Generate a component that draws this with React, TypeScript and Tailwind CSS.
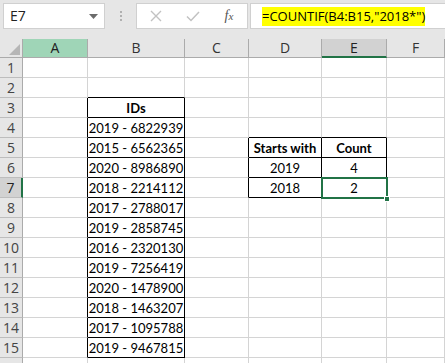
import React from "react";

const cols = [
  { key: "A", w: 65 },
  { key: "B", w: 97 },
  { key: "C", w: 64 },
  { key: "D", w: 73 },
  { key: "E", w: 65 },
  { key: "F", w: 58 },
];

const ids = [
  "2019 - 6822939",
  "2015 - 6562365",
  "2020 - 8986890",
  "2018 - 2214112",
  "2017 - 2788017",
  "2019 - 2858745",
  "2016 - 2320130",
  "2019 - 7256419",
  "2020 - 1478900",
  "2018 - 1463207",
  "2017 - 1095788",
  "2019 - 9467815",
];

type Cell = { v: string; bold?: boolean; fill?: boolean };

function getCell(col: string, row: number): Cell | null {
  if (col === "B" && row === 3) return { v: "IDs", bold: true, fill: true };
  if (col === "B" && row >= 4 && row <= 15) return { v: ids[row - 4] };
  if (col === "D" && row === 5) return { v: "Starts with", bold: true, fill: true };
  if (col === "E" && row === 5) return { v: "Count", bold: true, fill: true };
  if (col === "D" && row === 6) return { v: "2019" };
  if (col === "E" && row === 6) return { v: "4" };
  if (col === "D" && row === 7) return { v: "2018" };
  if (col === "E" && row === 7) return { v: "2" };
  return null;
}

function inTable(col: string, row: number) {
  return getCell(col, row) !== null;
}

const colKeys = cols.map((c) => c.key);

export default function App() {
  const rows = Array.from({ length: 16 }, (_, i) => i + 1);
  return (
    <div
      className="w-[445px] h-[363px] overflow-hidden bg-[#e6e6e6] relative"
      style={{ fontFamily: "'Open Sans', 'Noto Sans', sans-serif" }}
    >
      {/* Formula bar */}
      <div className="h-[39px] flex items-start pt-[3px] pl-[3px]">
        <div className="w-[102px] h-[26px] bg-white border border-[#d0d0d0] flex items-center justify-between pl-[6px] pr-[6px]">
          <span className="text-[14px] text-[#222] leading-none">E7</span>
          <svg width="9" height="5" viewBox="0 0 9 5">
            <polygon points="0,0 9,0 4.5,5" fill="#6b6b6b" />
          </svg>
        </div>
        <div className="w-[31px] h-[26px] flex flex-col items-center justify-center gap-[2px]">
          <div className="w-[2px] h-[2px] bg-[#b0b0b0]" />
          <div className="w-[2px] h-[2px] bg-[#b0b0b0]" />
          <div className="w-[2px] h-[2px] bg-[#b0b0b0]" />
        </div>
        <div className="w-[112px] h-[26px] bg-white border border-[#d0d0d0] flex items-center">
          <div className="w-[36px] flex justify-center ml-[1px]">
            <svg width="12" height="12" viewBox="0 0 12 12">
              <path d="M1 1 L11 11 M11 1 L1 11" stroke="#c2c2c2" strokeWidth="1.4" />
            </svg>
          </div>
          <div className="w-[37px] flex justify-center">
            <svg width="14" height="11" viewBox="0 0 14 11">
              <path d="M1 5.5 L5 9.5 L13 1" stroke="#c2c2c2" strokeWidth="1.5" fill="none" />
            </svg>
          </div>
          <div className="w-[36px] flex justify-center">
            <span
              className="text-[14px] italic text-[#555] leading-none"
              style={{ fontFamily: "'Liberation Serif', serif" }}
            >
              f<span className="text-[11px]">x</span>
            </span>
          </div>
        </div>
        <div className="ml-[2px] flex-1 h-[26px] bg-white border border-[#d0d0d0] border-r-0 flex items-center pl-[11px]">
          <span className="bg-[#ffff00] text-[13px] leading-[19px] text-black whitespace-nowrap">
            =COUNTIF(B4:B15,"2018*")
          </span>
        </div>
      </div>

      {/* Grid */}
      <div
        className="grid"
        style={{
          gridTemplateColumns: `23px ${cols.map((c) => c.w + "px").join(" ")}`,
          gridTemplateRows: `19px repeat(16, 20px)`,
        }}
      >
        {/* Corner */}
        <div className="bg-[#e6e6e6] border-r border-b border-[#ababab] relative">
          <svg className="absolute right-[2px] bottom-[2px]" width="11" height="11" viewBox="0 0 11 11">
            <polygon points="11,0 11,11 0,11" fill="#b6b6b6" />
          </svg>
        </div>
        {cols.map((c) => (
          <div
            key={c.key}
            className={
              "flex items-center justify-center text-[14px] leading-none border-r border-[#ababab] " +
              (c.key === "A"
                ? "bg-[#9fd5b7] text-[#222] border-b border-b-[#ababab]"
                : c.key === "E"
                ? "bg-[#d2d2d2] text-[#222] border-b-2 border-b-[#217346]"
                : "bg-[#e6e6e6] text-[#333] border-b border-b-[#ababab]")
            }
          >
            {c.key}
          </div>
        ))}

        {rows.map((r) => (
          <React.Fragment key={r}>
            <div
              className={
                "flex items-center justify-center text-[14px] leading-none border-b border-[#bdbdbd] " +
                (r === 7
                  ? "bg-[#d2d2d2] text-[#222] border-r-2 border-r-[#217346]"
                  : "bg-[#e6e6e6] text-[#444] border-r border-r-[#ababab]")
              }
            >
              {r <= 15 ? r : ""}
            </div>
            {cols.map((c, ci) => {
              const cell = getCell(c.key, r);
              const rightKey = colKeys[ci + 1];
              const blackRight = inTable(c.key, r) || (rightKey ? inTable(rightKey, r) : false);
              const blackBottom = inTable(c.key, r) || inTable(c.key, r + 1);
              return (
                <div
                  key={c.key}
                  className={
                    "bg-white border-r border-b flex items-center justify-center pt-[2px] text-[13px] leading-none text-black whitespace-nowrap " +
                    (blackRight ? "border-r-black " : "border-r-[#d4d4d4] ") +
                    (blackBottom ? "border-b-black " : "border-b-[#d4d4d4] ") +
                    (cell?.fill ? "bg-[#bfbfbf] " : "") +
                    (cell?.bold ? "font-bold " : "")
                  }
                  style={{ fontFamily: "Lato, 'Liberation Sans', sans-serif" }}
                >
                  {cell?.v ?? ""}
                </div>
              );
            })}
          </React.Fragment>
        ))}
      </div>

      {/* Selection of E7 */}
      <div className="absolute left-[321px] top-[177px] w-[67px] h-[22px] border-2 border-[#217346] pointer-events-none" />
      <div className="absolute left-[384px] top-[196px] w-[6px] h-[6px] bg-[#217346] border border-white pointer-events-none" />
    </div>
  );
}
